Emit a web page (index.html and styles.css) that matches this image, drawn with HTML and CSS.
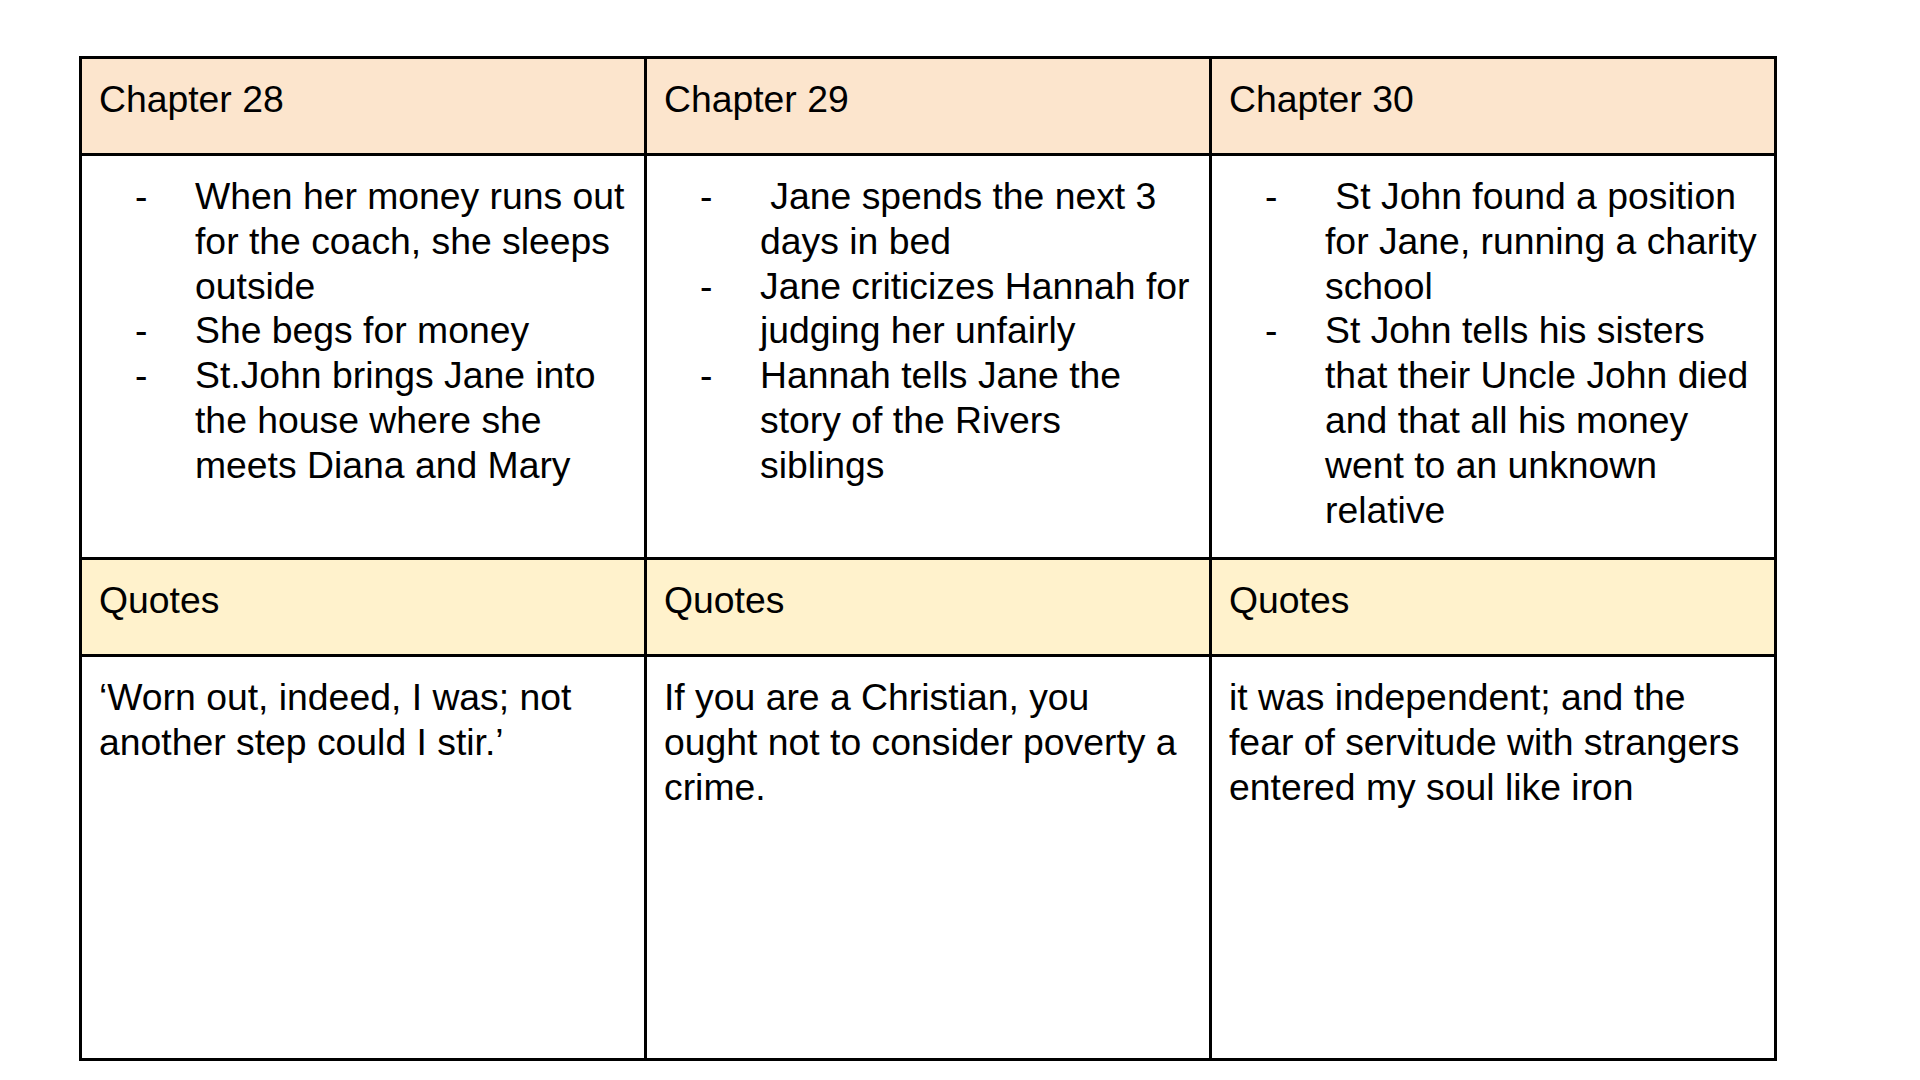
FILE: index.html
```html
<!DOCTYPE html>
<html lang="en">
<head>
<meta charset="utf-8">
<title>Jane Eyre – Chapters 28–30</title>
<link rel="stylesheet" href="styles.css">
</head>
<body>
<main class="sheet">
  <table class="notes">
    <tr class="row-head">
      <td>Chapter 28</td>
      <td>Chapter 29</td>
      <td>Chapter 30</td>
    </tr>
    <tr class="row-body">
      <td>
        <ul class="dash-list">
          <li><span class="dash">-</span><span class="item">When her money runs out<br>for the coach, she sleeps<br>outside</span></li>
          <li><span class="dash">-</span><span class="item">She begs for money</span></li>
          <li><span class="dash">-</span><span class="item">St.John brings Jane into<br>the house where she<br>meets Diana and Mary</span></li>
        </ul>
      </td>
      <td>
        <ul class="dash-list">
          <li><span class="dash">-</span><span class="item">&nbsp;Jane spends the next 3<br>days in bed</span></li>
          <li><span class="dash">-</span><span class="item">Jane criticizes Hannah for<br>judging her unfairly</span></li>
          <li><span class="dash">-</span><span class="item">Hannah tells Jane the<br>story of the Rivers<br>siblings</span></li>
        </ul>
      </td>
      <td>
        <ul class="dash-list">
          <li><span class="dash">-</span><span class="item">&nbsp;St John found a position<br>for Jane, running a charity<br>school</span></li>
          <li><span class="dash">-</span><span class="item">St John tells his sisters<br>that their Uncle John died<br>and that all his money<br>went to an unknown<br>relative</span></li>
        </ul>
      </td>
    </tr>
    <tr class="row-quote-head">
      <td>Quotes</td>
      <td>Quotes</td>
      <td>Quotes</td>
    </tr>
    <tr class="row-body">
      <td>‘Worn out, indeed, I was; not<br>another step could I stir.’</td>
      <td>If you are a Christian, you<br>ought not to consider poverty a<br>crime.</td>
      <td>it was independent; and the<br>fear of servitude with strangers<br>entered my soul like iron</td>
    </tr>
  </table>
</main>
</body>
</html>
```

FILE: styles.css
```css
html, body {
  margin: 0;
  padding: 0;
  background: #ffffff;
}

body {
  font-family: "Liberation Sans", Arial, sans-serif;
  color: #000000;
}

.sheet {
  padding: 56px 0 0 79px;
}

.notes {
  border-collapse: collapse;
  table-layout: fixed;
  width: 1698px;
  font-size: 37.33px;
  line-height: 44.8px;
}

.notes td {
  width: 33.333%;
  border: 3px solid #000000;
  vertical-align: top;
  padding: 18px 8px 0 17px;
  box-sizing: border-box;
}

.row-head td {
  height: 97px;
  background: #fce5cd;
}

.row-quote-head td {
  height: 97px;
  background: #fff2cc;
}

.row-body td {
  height: 404px;
}

.dash-list {
  list-style: none;
  margin: 0;
  padding: 0 0 0 36px;
}

.dash-list li {
  display: flex;
}

.dash {
  flex: none;
  width: 60px;
}

.item {
  flex: 1;
  min-width: 0;
}
```
